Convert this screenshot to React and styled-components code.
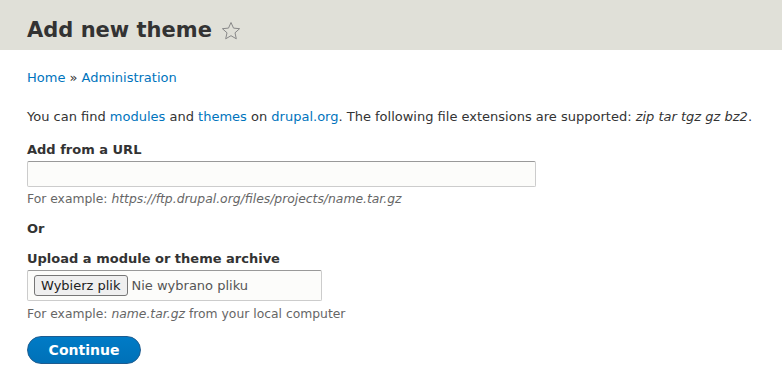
import styled, { createGlobalStyle } from "styled-components"

const GlobalStyle = createGlobalStyle`
  body {
    margin: 0;
    background: #fff;
    font-family: "DejaVu Sans", Verdana, sans-serif;
    font-size: 13px;
    color: #333;
  }
`

const Header = styled.div`
  background-color: #e0e0d8;
  height: 50px;
  box-sizing: border-box;
  padding: 0 27px 6px;
  display: flex;
  align-items: flex-end;
`

const Title = styled.h1`
  margin: 0;
  font-size: 21px;
  line-height: 28px;
  font-weight: 700;
  color: #333;
  display: flex;
  align-items: center;
  gap: 9px;
`

const Star = styled.svg`
  width: 20px;
  height: 20px;
  margin-top: 1px;
`

const Page = styled.div`
  padding: 21px 27px 0;
`

const Breadcrumb = styled.div`
  font-size: 13px;
  line-height: 14px;
  margin-bottom: 24px;
`

const Link = styled.a`
  color: #0074bd;
  text-decoration: none;
`

const Intro = styled.p`
  margin: 0 0 17px;
  line-height: 16px;
`

const Field = styled.div`
  margin-bottom: 15px;
`

const Label = styled.label`
  display: block;
  font-weight: 700;
  line-height: 16px;
  margin-bottom: 3px;
`

const TextInput = styled.input`
  box-sizing: border-box;
  display: block;
  width: 509px;
  height: 26px;
  margin: 0;
  border: 1px solid #ccc;
  border-top-color: #999;
  border-radius: 2px;
  background: #fcfcfa;
  font: inherit;
`

const FileBox = styled.div`
  box-sizing: border-box;
  width: 295px;
  height: 31px;
  border: 1px solid #ccc;
  border-top-color: #999;
  border-radius: 2px;
  background: #fcfcfa;
  display: flex;
  align-items: center;
  padding-left: 6px;
  gap: 4px;
`

const FileButton = styled.button`
  font-family: "DejaVu Sans", sans-serif;
  font-size: 13px;
  color: #222;
  background: #efefef;
  border: 1px solid #767676;
  border-radius: 3px;
  height: 21px;
  padding: 0 6px;
`

const FileStatus = styled.span`
  color: #555;
`

const Help = styled.div`
  font-size: 12.35px;
  color: #666;
  line-height: 14px;
  margin-top: ${(p) => p.$gap || 5}px;
`

const OrText = styled.div`
  font-weight: 700;
  margin-bottom: 14px;
  line-height: 16px;
`

const Continue = styled.button`
  display: block;
  font-family: "DejaVu Sans", sans-serif;
  font-weight: 700;
  font-size: 14px;
  color: #fff;
  width: 114px;
  height: 28px;
  margin: 0;
  padding: 0;
  border: 1px solid #1e5c90;
  border-radius: 20px;
  background: linear-gradient(to bottom, #007bc6, #0071b8);
`

export default function App() {
  return (
    <>
      <GlobalStyle />
      <Header>
        <Title>
          Add new theme
          <Star viewBox="0 0 20 20">
            <path
              d="M10 1.5l2.5 5.6 6.1.6-4.6 4.1 1.3 6-5.3-3.1-5.3 3.1 1.3-6-4.6-4.1 6.1-.6z"
              fill="none"
              stroke="#888"
              strokeWidth="1"
              strokeLinejoin="round"
            />
          </Star>
        </Title>
      </Header>
      <Page>
        <Breadcrumb>
          <Link href="#">Home</Link> » <Link href="#">Administration</Link>
        </Breadcrumb>
        <Intro>
          You can find <Link href="#">modules</Link> and <Link href="#">themes</Link> on{" "}
          <Link href="#">drupal.org</Link>. The following file extensions are supported:{" "}
          <em>zip tar tgz gz bz2</em>.
        </Intro>
        <Field>
          <Label>Add from a URL</Label>
          <TextInput type="text" />
          <Help>
            For example: <em>https://ftp.drupal.org/files/projects/name.tar.gz</em>
          </Help>
        </Field>
        <OrText>Or</OrText>
        <Field>
          <Label>Upload a module or theme archive</Label>
          <FileBox>
            <FileButton>Wybierz plik</FileButton>
            <FileStatus>Nie wybrano pliku</FileStatus>
          </FileBox>
          <Help $gap={6}>
            For example: <em>name.tar.gz</em> from your local computer
          </Help>
        </Field>
        <Continue>Continue</Continue>
      </Page>
    </>
  )
}
